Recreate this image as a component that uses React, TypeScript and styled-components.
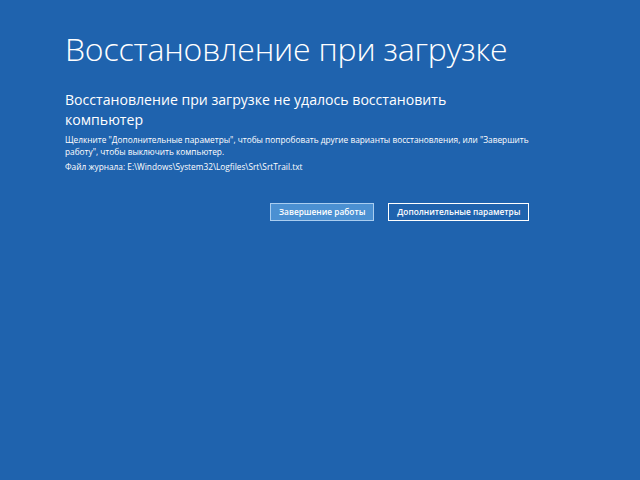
import React from "react";
import styled, { createGlobalStyle } from "styled-components";

const GlobalStyle = createGlobalStyle`
  html, body {
    margin: 0;
    padding: 0;
    background: #1f63ae;
  }
`;

const Screen = styled.div`
  width: 640px;
  height: 480px;
  box-sizing: border-box;
  padding: 27px 0 0 65px;
  background: #1f63ae;
  color: #ffffff;
  font-family: "Open Sans", "Noto Sans", sans-serif;
`;

const Title = styled.h1`
  margin: 0;
  font-size: 32px;
  font-weight: 300;
  line-height: 44px;
  letter-spacing: -0.2px;
`;

const Heading = styled.h2`
  margin: 19px 0 0 0;
  width: 400px;
  font-size: 14.1px;
  font-weight: 400;
  line-height: 20px;
`;

const Text = styled.p<{ $gap?: number }>`
  margin: ${(p) => p.$gap ?? 0}px 0 0 0;
  width: 470px;
  font-size: 8.3px;
  line-height: 12px;
`;

const Buttons = styled.div`
  display: flex;
  gap: 14px;
  margin: 30px 0 0 205px;
`;

const Button = styled.button<{ $primary?: boolean }>`
  height: 18px;
  padding: 0 8px;
  box-sizing: border-box;
  border: 1px solid ${(p) => (p.$primary ? "#a9cdf0" : "#ffffff")};
  background: ${(p) => (p.$primary ? "#4b90d2" : "transparent")};
  color: #ffffff;
  font-family: "Open Sans", "Noto Sans", sans-serif;
  font-size: 8.3px;
  font-weight: 600;
  line-height: 16px;
  cursor: pointer;
`;

export default function App() {
  return (
    <>
      <GlobalStyle />
      <Screen>
        <Title>Восстановление при загрузке</Title>
        <Heading>
          Восстановление при загрузке не удалось восстановить компьютер
        </Heading>
        <Text $gap={4}>
          Щелкните "Дополнительные параметры", чтобы попробовать другие
          варианты восстановления, или "Завершить работу", чтобы выключить
          компьютер.
        </Text>
        <Text $gap={3}>
          Файл журнала: E:\Windows\System32\Logfiles\Srt\SrtTrail.txt
        </Text>
        <Buttons>
          <Button $primary>Завершение работы</Button>
          <Button>Дополнительные параметры</Button>
        </Buttons>
      </Screen>
    </>
  );
}
